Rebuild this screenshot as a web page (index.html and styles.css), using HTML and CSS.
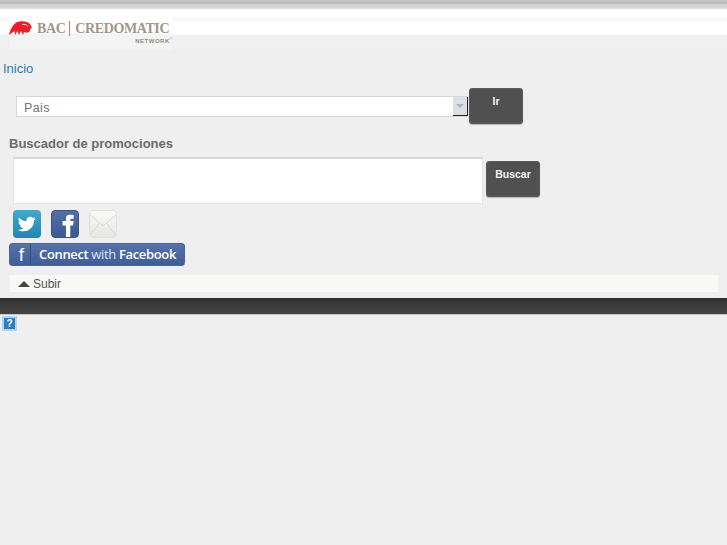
FILE: index.html
```html
<!DOCTYPE html>
<html lang="es">
<head>
    <meta charset="UTF-8">
    <meta name="viewport" content="width=device-width, initial-scale=1.0">
    <title>BAC Credomatic Network</title>
    <link rel="stylesheet" href="styles.css">
</head>
<body>
    <div class="top-strip"></div>
    <header class="header">
        <div class="logo">
            <svg class="logo-mark" width="23" height="15" viewBox="0 0 23 15">
                <path d="M0 14 C1 9 4 3 8 1 C11 0 15 0 18 1 C20 2 22 3 22 5 L23 7 L21 8 L21 10 C20 12 17 12 15 11 L14 14 L12 10 L10 14 L8.500 10 L6 14 L5.500 10 Z" fill="#e8202a"/>
                <path d="M13 3.500 C15 3 18 3.500 19 5.500" fill="none" stroke="#fff" stroke-width="0.8"/>
            </svg>
            <div class="logo-text">
                <div class="logo-name"><span>BAC</span><i class="logo-sep"></i><span>CREDOMATIC</span></div>
                <div class="logo-network">NETWORK<sup>®</sup></div>
            </div>
        </div>
    </header>

    <nav class="breadcrumb"><a href="#">Inicio</a></nav>

    <div class="country-row">
        <div class="select">
            <span class="select-label">Pais</span>
            <div class="select-arrow"></div>
        </div>
        <button class="btn btn-ir">Ir</button>
    </div>

    <h2 class="search-title">Buscador de promociones</h2>
    <div class="search-row">
        <div class="search-input"></div>
        <button class="btn btn-buscar">Buscar</button>
    </div>

    <div class="share">
        <a class="share-icon twitter" href="#">
            <svg width="20" height="16" viewBox="0 0 24 20">
                <path d="M23 3 C22 3.600 21.200 3.900 20.300 4 C21.300 3.400 22 2.500 22.300 1.500 C21.400 2 20.400 2.400 19.300 2.600 C18.400 1.600 17.200 1 15.900 1 C13.300 1 11.300 3.100 11.300 5.600 C11.300 6 11.300 6.300 11.400 6.600 C7.600 6.400 4.200 4.600 2 1.800 C1.600 2.500 1.400 3.300 1.400 4.100 C1.400 5.700 2.200 7.100 3.400 7.900 C2.700 7.900 2 7.700 1.400 7.400 C1.400 9.600 3 11.500 5.100 11.900 C4.400 12.100 3.700 12.100 3 12 C3.600 13.800 5.300 15.100 7.300 15.200 C5.400 16.700 3 17.400 0.600 17.100 C2.600 18.400 5 19.100 7.600 19.100 C16 19.100 20.600 12.200 20.600 6.200 L20.600 5.600 C21.600 4.900 22.400 4 23 3 Z" fill="#fff"/>
            </svg>
        </a>
        <a class="share-icon facebook" href="#">
            <svg width="26" height="26" viewBox="0 0 27 27">
                <path d="M14.500 27 L14.500 15 L11 15 L11 10.500 L14.500 10.500 L14.500 8 C14.500 4.500 16.500 4 19.500 4 L22.500 4.200 L22.500 8 L20.500 8 C19.200 8 19 8.700 19 9.700 L19 10.500 L22.500 10.500 L21.900 15 L19 15 L19 27 Z" fill="#fff"/>
            </svg>
        </a>
        <a class="share-icon mail" href="#">
            <svg width="26" height="26" viewBox="0 0 28 28">
                <path d="M0 4 L14 16 L28 4 M0 26 L10.500 13 M28 26 L17.500 13" fill="none" stroke="#d8d8d4" stroke-width="1"/>
            </svg>
        </a>
    </div>

    <a class="connect" href="#">
        <span class="connect-f">f</span>
        <span class="connect-text"><b>Connect</b> with <b>Facebook</b></span>
    </a>

    <div class="up-bar">
        <i class="up-arrow"></i>
        <span>Subir</span>
    </div>

    <footer class="footer"></footer>

    <div class="help-icon">?</div>
</body>
</html>
```

FILE: styles.css
```css
html, body {
    margin: 0;
    padding: 0;
}
body {
    height: 545px;
    overflow: hidden;
    background-color: #efefef;
    font-family: "Liberation Sans", Arial, sans-serif;
    font-size: 13px;
    color: #555;
}
.top-strip {
    height: 9px;
    background: linear-gradient(#c8c8c8 0, #b4b4b4 3px, #cfcfcf 4px, #d8d8d8 8px, #e8e8e8 9px);
}
.header {
    height: 36px;
    padding: 6px 0 0 9px;
    background: linear-gradient(#ffffff 0, #ffffff 8px, #f8f8f8 9px, #f8f8f8 12px, #ffffff 13px, #ffffff 25px, #f1f1f1 26px, #efefef 42px);
}
.logo {
    display: flex;
    width: 163px;
    height: 35px;
    padding-top: 6px;
    box-sizing: border-box;
    background: linear-gradient(#ffffff, #ffffff 18px, #f4f4f4 19px, #f3f3f3);
}
.logo-mark {
    flex: none;
}
.logo-text {
    margin-left: 5px;
    width: 133px;
}
.logo-name {
    display: flex;
    align-items: center;
    height: 15px;
    font-family: "Liberation Serif", serif;
    font-size: 14px;
    font-weight: bold;
    letter-spacing: -0.4px;
    color: #a1968b;
}
.logo-sep {
    flex: none;
    width: 1px;
    height: 15px;
    margin: 0 5px 0 4px;
    background: #d9776f;
}
.logo-network {
    margin-top: 1px;
    margin-right: -2px;
    text-align: right;
    font-size: 6px;
    font-weight: bold;
    letter-spacing: 0.5px;
    color: #8b8b85;
}
.logo-network sup {
    font-size: 3px;
    letter-spacing: 0;
}
.breadcrumb {
    padding: 10px 0 0 3px;
    line-height: 16px;
}
.breadcrumb a {
    color: #2c7bab;
    text-decoration: none;
}
.country-row {
    display: flex;
    align-items: flex-start;
    margin: 11px 0 0 16px;
}
.select {
    display: flex;
    align-items: center;
    justify-content: space-between;
    box-sizing: border-box;
    width: 452px;
    height: 21px;
    margin-top: 8px;
    padding-left: 7px;
    background: #fff;
    border: 1px solid #d8d8d8;
    border-right: none;
    font-size: 12.5px;
    letter-spacing: 0.4px;
    color: #757575;
}
.select-label {
    padding-top: 2px;
}
.select-arrow {
    position: relative;
    box-sizing: border-box;
    width: 15px;
    height: 19px;
    background: #dcdfe4;
    border-right: 1px solid #222;
    border-bottom: 1px solid #222;
}
.select-arrow::after {
    content: "";
    position: absolute;
    left: 3px;
    top: 7px;
    border: 4px solid transparent;
    border-top: 4px solid #b4b4b4;
}
.btn {
    display: block;
    box-sizing: border-box;
    padding: 0 0 10px;
    background: #505050;
    border: 1px solid #5a5a5a;
    border-radius: 3px;
    box-shadow: 0 1px 1px rgba(0,0,0,0.25);
    font-family: "Liberation Sans", Arial, sans-serif;
    font-size: 10.5px;
    font-weight: bold;
    color: #f4f4f4;
}
.btn-ir {
    width: 54px;
    height: 36px;
    margin-left: 1px;
}
.search-title {
    margin: 12px 0 0 9px;
    font-size: 13px;
    line-height: 16px;
    font-weight: bold;
    color: #6b6b6b;
}
.search-row {
    display: flex;
    align-items: flex-start;
    margin: 5px 0 0 13px;
}
.search-input {
    box-sizing: border-box;
    width: 470px;
    height: 47px;
    background: #fff;
    border: 1px solid #e6e4e0;
    border-top: 2px solid #d8d8d8;
}
.btn-buscar {
    width: 54px;
    height: 36px;
    margin: 4px 0 0 3px;
}
.share {
    display: flex;
    gap: 10px;
    margin: 6px 0 0 13px;
}
.share-icon {
    display: flex;
    align-items: center;
    justify-content: center;
    box-sizing: border-box;
    width: 28px;
    height: 28px;
    border-radius: 4px;
    overflow: hidden;
}
.twitter {
    background: linear-gradient(#45a9cc, #1f86b4);
}
.facebook {
    background: linear-gradient(#5470a8, #3d5890);
    border: 1px solid #3a5288;
}
.mail {
    background: linear-gradient(#f9f9f7, #e6e6e4);
    border: 1px solid #e2e2de;
}
.connect {
    display: flex;
    box-sizing: border-box;
    width: 176px;
    height: 23px;
    margin: 5px 0 0 9px;
    background: linear-gradient(#5572aa, #415d96);
    border: 1px solid #4a659c;
    border-radius: 3px;
    text-decoration: none;
    color: #fff;
}
.connect-f {
    box-sizing: border-box;
    width: 21px;
    padding-left: 3px;
    border-right: 1px solid #39507f;
    text-align: center;
    font-size: 19px;
    line-height: 22px;
}
.connect-text {
    padding-left: 8px;
    font-family: "Open Sans", "Liberation Sans", sans-serif;
    font-size: 13px;
    line-height: 21px;
    letter-spacing: -0.35px;
    color: #dbe2f0;
}
.connect-text b {
    color: #fff;
    font-weight: 600;
}
.up-bar {
    display: flex;
    align-items: center;
    box-sizing: border-box;
    width: 708px;
    height: 17px;
    margin: 9px 0 0 10px;
    padding-left: 8px;
    background: #f8f8f6;
    font-size: 12px;
}
.up-arrow {
    width: 0;
    height: 0;
    margin-right: 3px;
    border: 6px solid transparent;
    border-top: none;
    border-bottom: 6px solid #444;
}
.footer {
    height: 16px;
    margin-top: 6px;
    background: linear-gradient(#2c2c2c, #3a3a3a 5px, #424242);
    border-bottom: 1px solid #c8c8c8;
}
.help-icon {
    box-sizing: border-box;
    width: 15px;
    height: 15px;
    margin: 1px 0 0 2px;
    background: #2a7fc0;
    border: 2px solid #b5d3ea;
    text-align: center;
    font-size: 10px;
    line-height: 11px;
    font-weight: bold;
    color: #fff;
}
```
